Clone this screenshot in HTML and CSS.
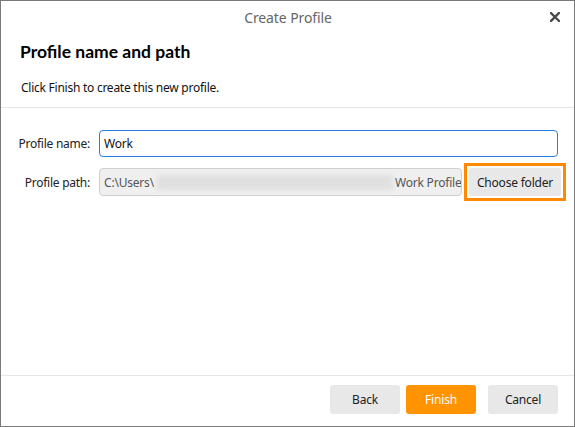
FILE: index.html
```html
<!DOCTYPE html>
<html lang="en">
<head>
<meta charset="utf-8">
<title>Create Profile</title>
<link rel="stylesheet" href="styles.css">
</head>
<body>
<div class="window">
  <div class="titlebar">
    <span></span>
    <span class="title">Create Profile</span>
    <span class="close-wrap">
      <svg class="close" width="10" height="10" viewBox="0 0 10 10"><path d="M1 1L9 9M9 1L1 9" stroke="#4a4a4a" stroke-width="2.4" stroke-linecap="square"/></svg>
    </span>
  </div>
  <div class="header">
    <h1 class="heading">Profile name and path</h1>
    <p class="intro">Click Finish to create this new profile.</p>
  </div>
  <div class="form">
    <label class="label">Profile name:</label>
    <div class="input input-active">Work</div>
    <label class="label">Profile path:</label>
    <div class="path-row">
      <div class="input input-disabled">
        <span class="path-start">C:\Users\</span>
        <span class="blur"></span>
        <span class="path-end">Work Profile</span>
      </div>
      <div class="focus-ring"><button class="btn btn-choose">Choose folder</button></div>
    </div>
  </div>
  <div class="spacer"></div>
  <div class="footer">
    <button class="btn btn-footer">Back</button>
    <button class="btn btn-footer btn-primary">Finish</button>
    <button class="btn btn-footer btn-cancel">Cancel</button>
  </div>
</div>
</body>
</html>
```

FILE: styles.css
```css
* { box-sizing: border-box; }
html, body { margin: 0; padding: 0; background: #fff; }
body { font-family: "Noto Sans", "Open Sans", "Liberation Sans", sans-serif; color: #1a1a1a; }

.window {
  width: 575px;
  height: 427px;
  border: 1px solid #7a7a7a;
  display: flex;
  flex-direction: column;
  background: #fff;
}

.titlebar {
  height: 31px;
  display: grid;
  grid-template-columns: 1fr auto 1fr;
  align-items: center;
}
.title { font-size: 14px; color: #666; letter-spacing: -0.1px; padding-top: 1px; padding-left: 1px; }
.close-wrap { display: flex; justify-content: flex-end; padding-right: 14px; }
.close { display: block; }

.header {
  padding: 7px 19px 0 19px;
  border-bottom: 1px solid #e6e6e6;
  height: 76px;
}
.heading {
  margin: 0;
  font-family: Lato, "Noto Sans", sans-serif;
  font-size: 17.5px;
  font-weight: 700;
  color: #000;
  letter-spacing: 0;
  line-height: 26px;
}
.intro {
  margin: 15px 0 0 1px;
  font-size: 12px;
  line-height: 16px;
  color: #111;
  letter-spacing: -0.25px;
}

.form {
  display: grid;
  grid-template-columns: 79px 1fr;
  column-gap: 9px;
  row-gap: 6px;
  padding: 22px 15px 0 10px;
  align-items: center;
}
.label {
  text-align: right;
  font-size: 12px;
  color: #222;
  letter-spacing: -0.25px;
}
.input {
  height: 27px;
  border-radius: 4px;
  font-size: 12px;
  letter-spacing: -0.2px;
  display: flex;
  align-items: center;
  padding: 0 4px;
  white-space: nowrap;
  overflow: hidden;
}
.input-active {
  border: 1px solid #2a7fdc;
  color: #111;
  margin-right: 1px;
}
.input-disabled {
  flex: 1;
  min-width: 0;
  height: 28px;
  border: 1px solid #cfcfcf;
  background: #efefef;
  color: #555;
  padding-right: 0;
}
.path-start { flex: none; }
.blur {
  flex: none;
  width: 236px;
  height: 15px;
  margin-left: 3px;
  background: #e0e0e0;
  filter: blur(2px);
}
.path-end { flex: none; margin-left: 2px; }

.path-row {
  display: flex;
  align-items: center;
  gap: 2px;
  margin-right: -7px;
  min-width: 0;
}
.focus-ring {
  flex: none;
  border: 3px solid #ff8a00;
  padding: 2px;
  width: 102px;
  height: 38px;
}
.btn {
  font-family: inherit;
  border: none;
  border-radius: 3px;
  background: #e8e8e8;
  color: #222;
  font-size: 12px;
  letter-spacing: -0.2px;
  padding: 0;
  cursor: pointer;
}
.btn-choose { width: 92px; height: 28px; }

.spacer { flex: 1; }

.footer {
  border-top: 1px solid #e6e6e6;
  height: 51px;
  display: flex;
  justify-content: flex-end;
  align-items: flex-start;
  padding: 9px 16px 0 0;
  gap: 6px;
}
.btn-footer { width: 70px; height: 29px; }
.btn-primary { background: #ff9400; color: #fff; }
.btn-cancel { margin-left: 6px; }
```
